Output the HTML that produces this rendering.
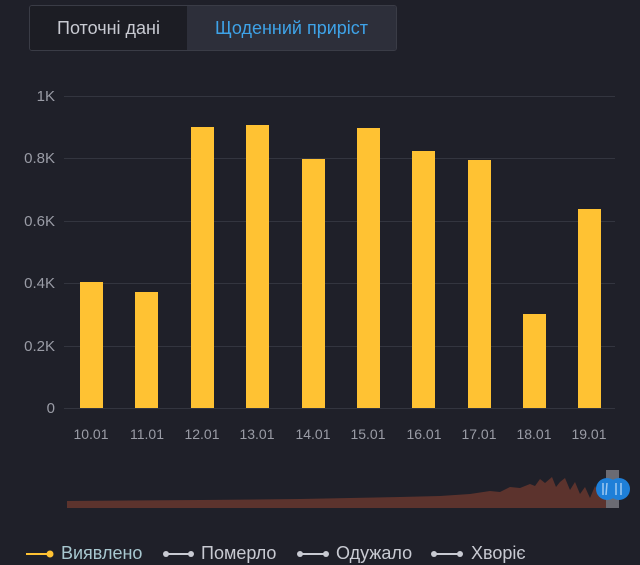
<!DOCTYPE html><html><head><meta charset="utf-8"><style>
body{margin:0;width:640px;height:565px;background:#1f2029;font-family:"Liberation Sans",sans-serif;overflow:hidden;position:relative}
.tabs{position:absolute;left:29px;top:5px;width:368px;height:46px;border:1px solid #3a3c46;border-radius:3px;box-sizing:border-box;display:flex;overflow:hidden}
.t1{width:157px;background:#1c1d24;color:#c8cad2;font-size:18px;line-height:44px;text-align:center}
.t2{flex:1;background:#2d2f3a;color:#3ea3e8;font-size:18px;line-height:44px;text-align:center}
.leg{position:absolute;top:543px;font-size:18px;color:#c8cad2}
</style></head><body>
<div class="tabs"><div class="t1">Поточні дані</div><div class="t2">Щоденний приріст</div></div>
<svg width="640" height="565" style="position:absolute;left:0;top:0">
<g stroke="#33353f" stroke-width="1">
<line x1="64" x2="615" y1="96.5" y2="96.5"/><line x1="64" x2="615" y1="158.5" y2="158.5"/><line x1="64" x2="615" y1="221.5" y2="221.5"/><line x1="64" x2="615" y1="283.5" y2="283.5"/><line x1="64" x2="615" y1="346.5" y2="346.5"/><line x1="64" x2="615" y1="408.5" y2="408.5"/>
</g>
<g fill="#9a9ca6" font-size="15" text-anchor="end" font-family="Liberation Sans">
<text x="55" y="101">1K</text><text x="55" y="163">0.8K</text><text x="55" y="226">0.6K</text><text x="55" y="288">0.4K</text><text x="55" y="351">0.2K</text><text x="55" y="413">0</text>
</g>
<g fill="#ffc233">
<rect x="80" y="282" width="23" height="126"/><rect x="135" y="292" width="23" height="116"/><rect x="191" y="127" width="23" height="281"/><rect x="246" y="125" width="23" height="283"/><rect x="302" y="159" width="23" height="249"/><rect x="357" y="128" width="23" height="280"/><rect x="412" y="151" width="23" height="257"/><rect x="468" y="160" width="23" height="248"/><rect x="523" y="314" width="23" height="94"/><rect x="578" y="209" width="23" height="199"/>
</g>
<g fill="#9a9ca6" font-size="14" text-anchor="middle" font-family="Liberation Sans">
<text x="91" y="439">10.01</text><text x="147" y="439">11.01</text><text x="202" y="439">12.01</text><text x="257" y="439">13.01</text><text x="313" y="439">14.01</text><text x="368" y="439">15.01</text><text x="424" y="439">16.01</text><text x="479" y="439">17.01</text><text x="534" y="439">18.01</text><text x="589" y="439">19.01</text>
</g>
<path fill="#5c332d" d="M67 508 L67 501 L200 500 L300 499 L350 498 L400 497 L440 496 L470 494 L490 491 L500 492 L510 487 L520 488 L530 484 L535 486 L540 479 L545 483 L552 477 L556 487 L560 482 L565 478 L570 490 L575 482 L580 494 L585 487 L590 498 L595 486 L600 496 L606 490 L606 508 Z"/>
<rect x="606" y="470" width="13" height="38" fill="#6b6b73"/>
<circle cx="607" cy="489" r="11" fill="#1e7fd8"/><circle cx="619" cy="489" r="11" fill="#1e7fd8"/>
<g stroke="#9ec8f0" stroke-width="1.5"><line x1="603" y1="483" x2="603" y2="495"/><line x1="607" y1="483" x2="606" y2="495"/><line x1="616" y1="483" x2="616" y2="495"/><line x1="621" y1="483" x2="621" y2="495"/></g>
<g stroke-width="2"><line x1="26" x2="48" y1="554" y2="554" stroke="#ffc233"/><circle cx="50" cy="554" r="3.5" fill="#ffc233"/>
<line x1="166" x2="190" y1="554" y2="554" stroke="#c8cad2"/><circle cx="166" cy="554" r="3" fill="#c8cad2"/><circle cx="191" cy="554" r="3" fill="#c8cad2"/>
<line x1="300" x2="326" y1="554" y2="554" stroke="#c8cad2"/><circle cx="300" cy="554" r="3" fill="#c8cad2"/><circle cx="326" cy="554" r="3" fill="#c8cad2"/>
<line x1="434" x2="460" y1="554" y2="554" stroke="#c8cad2"/><circle cx="434" cy="554" r="3" fill="#c8cad2"/><circle cx="460" cy="554" r="3" fill="#c8cad2"/></g>
</svg>
<div class="leg" style="left:61px;color:#a8c8d0">Виявлено</div>
<div class="leg" style="left:201px">Померло</div>
<div class="leg" style="left:336px">Одужало</div>
<div class="leg" style="left:471px">Хворіє</div>
</body></html>
